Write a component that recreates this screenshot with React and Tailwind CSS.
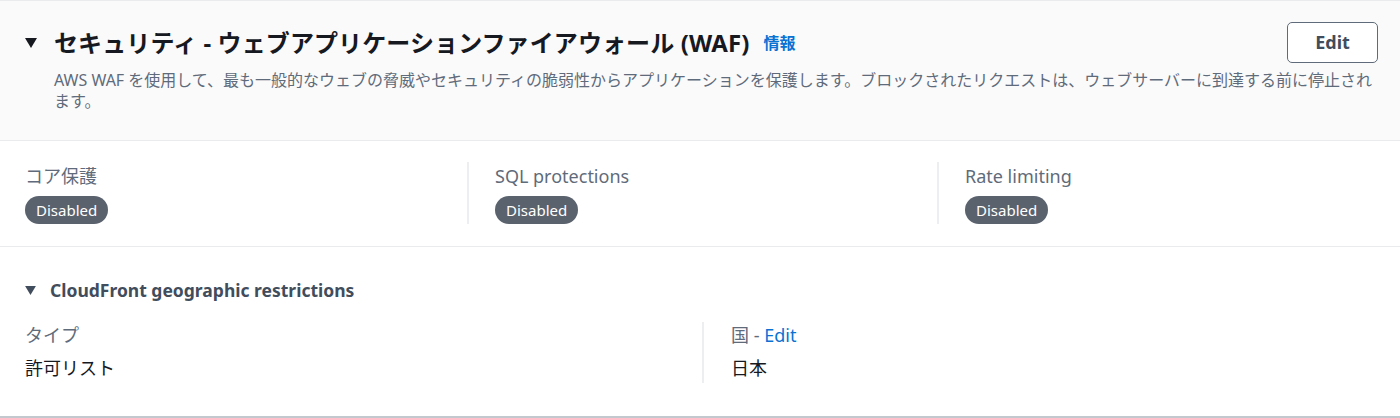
import React from "react";

const font = { fontFamily: '"Noto Sans", "Noto Sans CJK JP", sans-serif' };

const Caret = ({ className }) => (
  <svg viewBox="0 0 12 10" className={className} aria-hidden="true">
    <path d="M0 0 H12 L6 10 Z" fill="currentColor" />
  </svg>
);

const Badge = ({ children }) => (
  <span className="inline-flex items-center h-[28px] px-[11px] rounded-full bg-[#5a626e] text-white text-[15px] leading-none">
    {children}
  </span>
);

const Stat = ({ label, className }) => (
  <div className={className}>
    <div className="text-[18px] leading-[28px] text-[#5f6b7a]">{label}</div>
    <div className="mt-[6px] flex">
      <Badge>Disabled</Badge>
    </div>
  </div>
);

export default function App() {
  return (
    <div className="w-[1400px] bg-white antialiased" style={font}>
      {/* Header */}
      <div className="border-t border-b border-[#e9ebed] bg-[#fafafa] pl-[25px] pr-[22px] pt-[21px] pb-[28px]">
        <div className="flex items-center justify-between h-[41px]">
          <div className="flex items-center">
            <Caret className="w-[12px] h-[10px] text-[#16191f]" />
            <h2 className="ml-[17px] text-[24px] leading-[30px] font-bold text-[#16191f] tracking-[0.1px]">
              セキュリティ - ウェブアプリケーションファイアウォール (WAF)
            </h2>
            <a href="#" className="ml-[14px] text-[16px] font-bold text-[#0972d3]">
              情報
            </a>
          </div>
          <button className="h-[41px] w-[91px] rounded-[5px] border-[1.5px] border-[#5f6b7a] bg-white text-[18px] font-bold text-[#414d5c]">
            Edit
          </button>
        </div>
        <p className="mt-[7px] pl-[29px] -mr-[14px] text-[16px] leading-[21px] text-[#5f6b7a]">
          AWS WAF を使用して、最も一般的なウェブの脅威やセキュリティの脆弱性からアプリケーションを保護します。ブロックされたリクエストは、ウェブサーバーに到達する前に停止され
          <br />
          ます。
        </p>
      </div>

      {/* Protections */}
      <div className="border-b border-[#e9ebed] pl-[25px] pt-[21px] pb-[22px] flex">
        <Stat label="コア保護" className="w-[442px]" />
        <Stat label="SQL protections" className="w-[470px] border-l-2 border-[#eceef0] pl-[26px]" />
        <Stat label="Rate limiting" className="flex-1 border-l-2 border-[#eceef0] pl-[26px]" />
      </div>

      {/* Geo restrictions */}
      <div className="border-b-2 border-[#c3c8cf] pl-[25px] pt-[31px] pb-[33px]">
        <div className="flex items-center h-[24px]">
          <Caret className="w-[11px] h-[9px] text-[#414d5c]" />
          <span className="ml-[14px] text-[17.5px] font-bold text-[#414d5c]">
            CloudFront geographic restrictions
          </span>
        </div>
        <div className="mt-[20px] grid grid-cols-[677px_1fr]">
          <div className="pb-[2px]">
            <div className="text-[18px] leading-[26px] text-[#5f6b7a]">タイプ</div>
            <div className="mt-[7px] text-[18px] leading-[26px] text-[#16191f]">許可リスト</div>
          </div>
          <div className="border-l-2 border-[#eceef0] pl-[27px] pb-[2px]">
            <div className="text-[18px] leading-[26px] text-[#5f6b7a]">
              国 - <a href="#" className="text-[#0972d3]">Edit</a>
            </div>
            <div className="mt-[7px] text-[18px] leading-[26px] text-[#16191f]">日本</div>
          </div>
        </div>
      </div>
    </div>
  );
}
